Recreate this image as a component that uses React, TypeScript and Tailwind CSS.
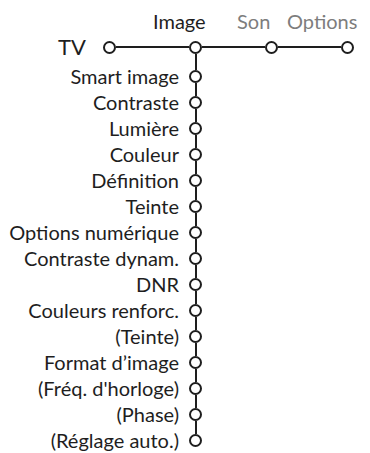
import React from 'react';

const items = [
    'Smart image',
    'Contraste',
    'Lumière',
    'Couleur',
    'Définition',
    'Teinte',
    'Options numérique',
    'Contraste dynam.',
    'DNR',
    'Couleurs renforc.',
    '(Teinte)',
    'Format d’image',
    "(Fréq. d'horloge)",
    '(Phase)',
    '(Réglage auto.)',
];

const Node: React.FC = () => (
    <span className="block w-[13px] h-[13px] shrink-0 rounded-full border-2 border-[#1e1e1e] bg-white"></span>
);

const App: React.FC = () => {
    return (
        <div className="w-[370px] h-[453px] bg-white text-[#1e1e1e] font-['Lato',sans-serif] overflow-hidden">

            {/* Tabs */}
            <div className="flex items-end h-[31px] pl-[153px] text-[20px] leading-none">
                <span className="w-[84px]">Image</span>
                <span className="w-[50px] text-[#7d7d7d]">Son</span>
                <span className="text-[#7d7d7d]">Options</span>
            </div>

            {/* TV row */}
            <div className="flex items-stretch h-[32px]">
                <span className="w-[86px] self-center text-right text-[22px] leading-none">TV</span>
                <div className="ml-[17px] self-center">
                    <Node />
                </div>
                <span className="block w-[73px] h-[2px] self-center bg-[#1e1e1e]"></span>
                <div className="flex flex-col items-center">
                    <span className="block h-[9.5px]"></span>
                    <Node />
                    <span className="block w-[2px] flex-1 bg-[#1e1e1e]"></span>
                </div>
                <span className="block w-[63px] h-[2px] self-center bg-[#1e1e1e]"></span>
                <div className="self-center">
                    <Node />
                </div>
                <span className="block w-[63px] h-[2px] self-center bg-[#1e1e1e]"></span>
                <div className="self-center">
                    <Node />
                </div>
            </div>

            {/* Image submenu */}
            <div className="flex flex-col">
                {items.map((label, i) => (
                    <div key={label} className="flex items-stretch h-[26px]">
                        <span className="w-[179px] self-center text-right text-[20px] leading-none whitespace-nowrap">
                            {label}
                        </span>
                        <div className="ml-[10px] w-[13px] flex flex-col items-center">
                            <span className="block w-[2px] flex-1 bg-[#1e1e1e]"></span>
                            <Node />
                            <span className={i === items.length - 1 ? 'block w-[2px] flex-1' : 'block w-[2px] flex-1 bg-[#1e1e1e]'}></span>
                        </div>
                    </div>
                ))}
            </div>
        </div>
    );
};

export default App;
